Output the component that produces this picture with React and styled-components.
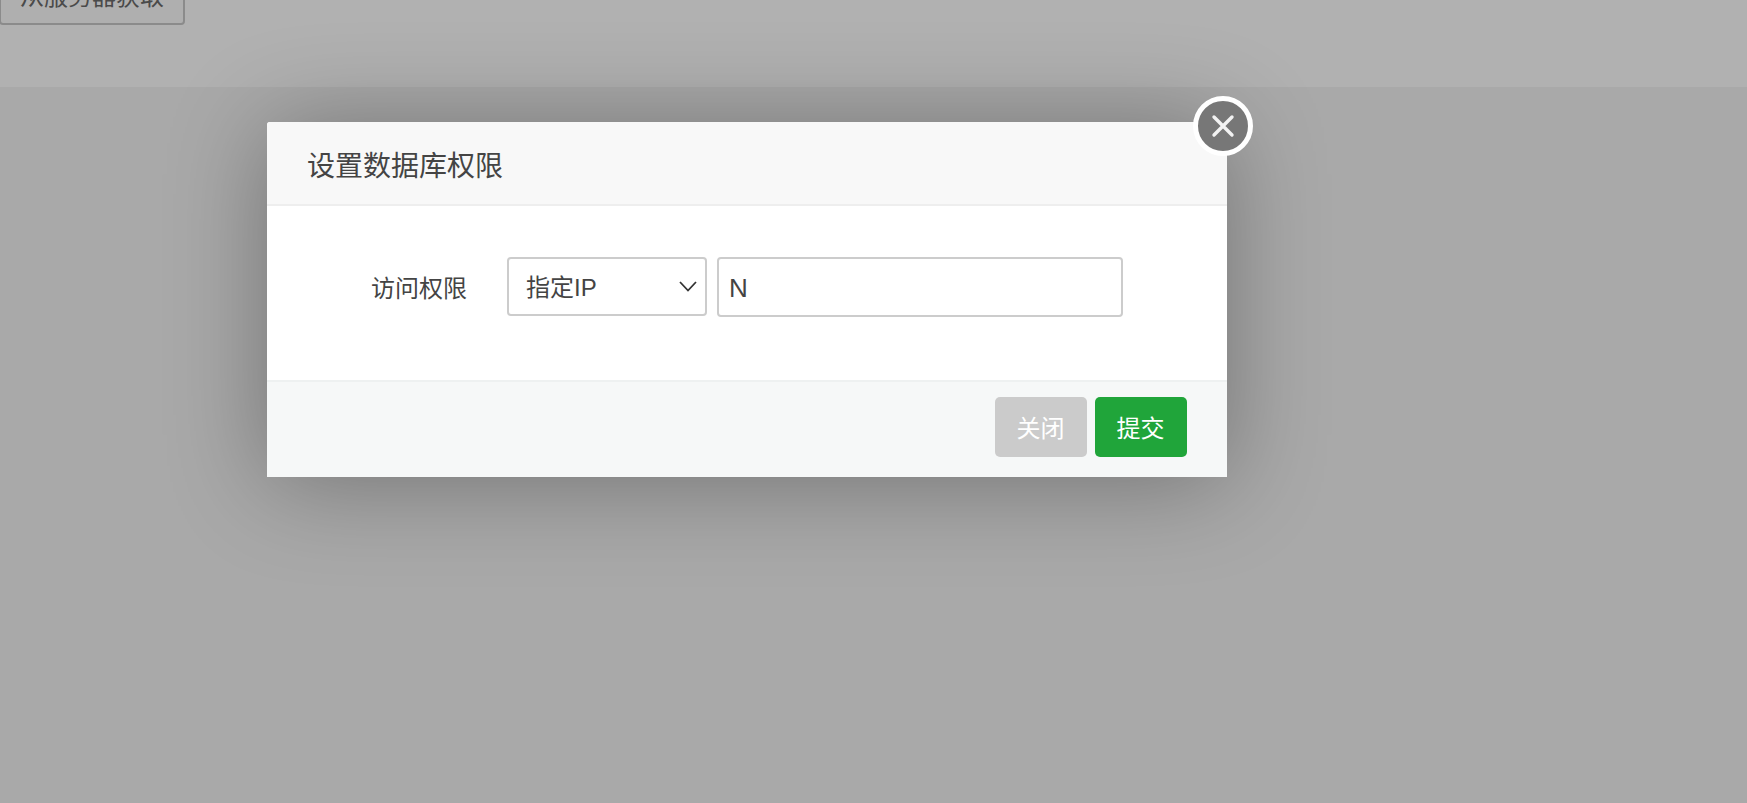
import React, {useState} from "react";
import styled, {createGlobalStyle} from "styled-components";

const Global = createGlobalStyle`
  html, body { margin: 0; padding: 0; background: #a9a9a9; }
  body {
    font-family: "Liberation Sans", "Noto Sans CJK SC", sans-serif;
    color: #444;
  }
  * { box-sizing: border-box; }
`

const Page = styled.div`
  position: relative;
  height: 803px;
  overflow: hidden;
`

const TopBand = styled.div`
  display: flow-root;
  height: 87px;
  background: #b1b1b1;
`

const FetchButton = styled.button`
  display: block;
  width: 186px;
  height: 61px;
  margin: -36px 0 0 -1px;
  padding: 0;
  background: #afafaf;
  border: 2px solid #8b8b8b;
  border-radius: 4px;
  font: inherit;
  font-size: 24px;
  color: #4a4a4a;
`

const Layer = styled.div`
  position: absolute;
  inset: 0;
  padding: 122px 0 0 267px;
`

const Dialog = styled.div`
  position: relative;
  width: 960px;
  background: #fff;
  border-radius: 3px;
  box-shadow: 0 5px 100px rgba(0, 0, 0, .32);
`

const Head = styled.div`
  height: 84px;
  padding: 1px 0 0 40px;
  display: flex;
  align-items: center;
  background: #f8f8f8;
  border-bottom: 2px solid #eee;
  border-radius: 3px 3px 0 0;
  font-size: 28px;
`

const Close = styled.button`
  position: absolute;
  top: -26px;
  right: -26px;
  width: 60px;
  height: 60px;
  padding: 0;
  display: flex;
  align-items: center;
  justify-content: center;
  background: #777;
  border: 5px solid #fff;
  border-radius: 50%;
  filter: blur(.7px);
`

const Body = styled.div`
  height: 174px;
  padding: 51px 0 0 104px;
  display: flex;
  align-items: flex-start;
`

const Label = styled.label`
  width: 136px;
  height: 58px;
  line-height: 63px;
  font-size: 24px;
  flex-shrink: 0;
`

const SelectWrap = styled.div`
  position: relative;
  width: 200px;
  height: 59px;
  margin-right: 10px;
`

const Select = styled.select`
  appearance: none;
  display: block;
  width: 100%;
  height: 100%;
  padding: 2px 0 0 17px;
  background: #fff;
  border: 2px solid #ccc;
  border-radius: 4px;
  outline: none;
  font: inherit;
  font-size: 24px;
  color: #444;
`

const Arrow = styled.svg`
  position: absolute;
  top: 23px;
  right: 9px;
  width: 20px;
  height: 12px;
  pointer-events: none;
`

const Input = styled.input`
  display: block;
  width: 406px;
  height: 60px;
  padding: 2px 10px 0;
  background: #fff;
  border: 2px solid #ccc;
  border-radius: 4px;
  outline: none;
  font: inherit;
  font-size: 26px;
  color: #444;
`

const Foot = styled.div`
  height: 97px;
  padding: 15px 40px 0 0;
  display: flex;
  justify-content: flex-end;
  gap: 8px;
  background: #f6f8f8;
  border-top: 2px solid #eef1f1;
`

const Button = styled.button`
  width: 92px;
  height: 60px;
  padding: 0 1px 2px 0;
  border: none;
  border-radius: 5px;
  background: ${props => props.$primary ? "#20a53a" : "#cbcbcb"};
  color: #fff;
  font: inherit;
  font-size: 24px;
`

const App = () => {
    const [mode, setMode] = useState('ip');
    const [ip, setIp] = useState('N');
    return <Page>
        <Global/>
        <TopBand>
            <FetchButton>从服务器获取</FetchButton>
        </TopBand>
        <Layer>
            <Dialog>
                <Head>设置数据库权限</Head>
                <Close>
                    <svg width="24" height="24" viewBox="0 0 24 24" fill="none" stroke="#f2f2f2" strokeWidth="3.4" strokeLinecap="round">
                        <path d="M3 3 L21 21 M21 3 L3 21"/>
                    </svg>
                </Close>
                <Body>
                    <Label>访问权限</Label>
                    <SelectWrap>
                        <Select value={mode} onChange={(e)=> setMode(e.target.value)}>
                            <option value={'ip'}>指定IP</option>
                            <option value={'all'}>所有人</option>
                            <option value={'local'}>本地服务器</option>
                        </Select>
                        <Arrow viewBox="0 0 20 12" fill="none" stroke="#333" strokeWidth="1.8">
                            <path d="M2 2 L10 10.5 L18 2"/>
                        </Arrow>
                    </SelectWrap>
                    <Input value={ip} onChange={(e)=> setIp(e.target.value)}/>
                </Body>
                <Foot>
                    <Button>关闭</Button>
                    <Button $primary>提交</Button>
                </Foot>
            </Dialog>
        </Layer>
    </Page>
}

export default App;
